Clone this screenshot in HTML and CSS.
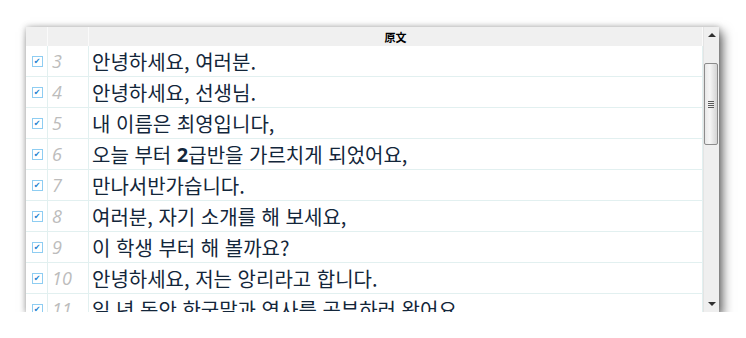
FILE: index.html
```html
<!DOCTYPE html>
<html lang="ko">
<head>
  <meta charset="UTF-8">
  <title>原文</title>
  <link rel="stylesheet" href="styles.css">
</head>
<body>
  <div class="window">
    <div class="grid">
      <div class="row head">
        <div class="cell check"></div>
        <div class="cell num"></div>
        <div class="cell text">原文</div>
      </div>
      <div class="row"><div class="cell check"><span class="box">&#10004;</span></div><div class="cell num">3</div><div class="cell text">안녕하세요, 여러분.</div></div>
      <div class="row"><div class="cell check"><span class="box">&#10004;</span></div><div class="cell num">4</div><div class="cell text">안녕하세요, 선생님.</div></div>
      <div class="row"><div class="cell check"><span class="box">&#10004;</span></div><div class="cell num">5</div><div class="cell text">내 이름은 최영입니다,</div></div>
      <div class="row"><div class="cell check"><span class="box">&#10004;</span></div><div class="cell num">6</div><div class="cell text">오늘 부터&nbsp;<b class="digit">2</b>급반을 가르치게 되었어요,</div></div>
      <div class="row"><div class="cell check"><span class="box">&#10004;</span></div><div class="cell num">7</div><div class="cell text">만나서반가습니다.</div></div>
      <div class="row"><div class="cell check"><span class="box">&#10004;</span></div><div class="cell num">8</div><div class="cell text">여러분, 자기 소개를 해 보세요,</div></div>
      <div class="row"><div class="cell check"><span class="box">&#10004;</span></div><div class="cell num">9</div><div class="cell text">이 학생 부터 해 볼까요?</div></div>
      <div class="row"><div class="cell check"><span class="box">&#10004;</span></div><div class="cell num">10</div><div class="cell text">안녕하세요, 저는 앙리라고 합니다.</div></div>
      <div class="row"><div class="cell check"><span class="box">&#10004;</span></div><div class="cell num">11</div><div class="cell text">일 년 동안 한국말과 역사를 공부하러 왔어요.</div></div>
    </div>
    <div class="scrollbar">
      <div class="arrow up"></div>
      <div class="track">
        <div class="thumb"><span class="grip"></span></div>
      </div>
      <div class="arrow down"></div>
    </div>
  </div>
</body>
</html>
```

FILE: styles.css
```css
body {
  margin: 0;
  padding: 27px 0 0 26px;
  background: #fff;
  font-family: "Noto Sans CJK KR", "Noto Sans", sans-serif;
}

.window {
  width: 693px;
  height: 285px;
  display: flex;
  background: #fff;
  box-shadow: 4px 5px 10px rgba(0, 0, 0, 0.55), 0 0 6px rgba(0, 0, 0, 0.25);
  overflow: hidden;
}

.grid {
  width: 677px;
  height: 285px;
  overflow: hidden;
}

.row {
  display: flex;
  height: 30px;
  border-bottom: 1px solid #e2f0f0;
}

.cell {
  border-right: 1px solid #e2f0f0;
  display: flex;
  align-items: center;
  box-sizing: border-box;
  white-space: nowrap;
}

.check {
  width: 22px;
  justify-content: center;
}

.num {
  width: 41px;
  padding-left: 4px;
  font-family: "Open Sans", "DejaVu Sans", sans-serif;
  font-style: italic;
  font-size: 18px;
  color: #bcbcbc;
}

.text {
  flex: 1;
  padding-left: 3px;
  font-size: 20px;
  color: #13263a;
}

.digit {
  font-family: "Open Sans", sans-serif;
  font-weight: bold;
}

.row.head {
  height: 19px;
  border-bottom: none;
  background: #f0f0f0;
}

.row.head .cell {
  border-right: 1px solid #fafafa;
}

.row.head .text {
  justify-content: center;
  padding-left: 0;
  font-family: "Noto Sans CJK SC", sans-serif;
  font-weight: bold;
  font-size: 11px;
  color: #000;
}

.box {
  width: 11px;
  height: 11px;
  box-sizing: border-box;
  border: 1px solid #8ecdf2;
  background: #fff;
  color: #1b7fd0;
  font-family: "DejaVu Sans", sans-serif;
  font-weight: bold;
  font-size: 8px;
  line-height: 9px;
  text-align: center;
  margin-left: 1px;
}

.scrollbar {
  width: 16px;
  display: flex;
  flex-direction: column;
  background: #efefef;
  border-left: 1px solid #e4e4e4;
  box-sizing: border-box;
}

.arrow {
  height: 16px;
  display: flex;
  align-items: center;
  justify-content: center;
}

.arrow::after {
  content: "";
  width: 0;
  height: 0;
  border-left: 4px solid transparent;
  border-right: 4px solid transparent;
}

.arrow.up::after {
  border-bottom: 4px solid #303030;
}

.arrow.down {
  margin-top: auto;
}

.arrow.down::after {
  border-top: 4px solid #303030;
}

.track {
  flex: 1;
  padding-top: 20px;
}

.thumb {
  width: 14px;
  height: 82px;
  box-sizing: border-box;
  border: 1px solid #8c8c8c;
  border-radius: 2px;
  background: linear-gradient(to right, #e8e8e8, #f6f6f6 40%, #d4d4d4);
  display: flex;
  align-items: center;
  justify-content: center;
}

.grip {
  width: 6px;
  height: 7px;
  background: repeating-linear-gradient(to bottom, #5a5a5a 0, #5a5a5a 1px, transparent 1px, transparent 2px);
}
```
